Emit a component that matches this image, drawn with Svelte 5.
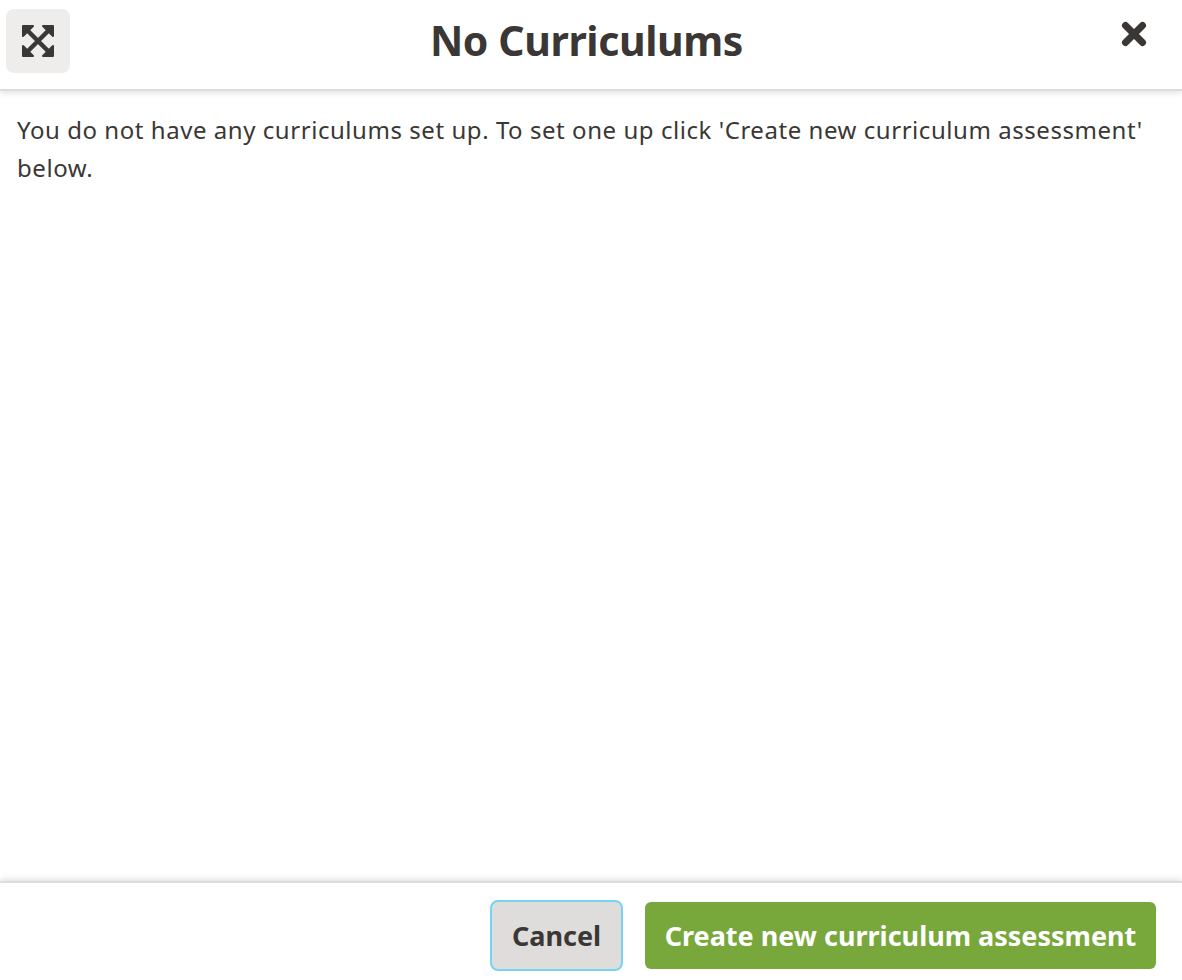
<script>
  const title = "No Curriculums";
  const message = "You do not have any curriculums set up. To set one up click 'Create new curriculum assessment' below.";
</script>

<div class="modal">
  <header class="head">
    <button class="expand" aria-label="Expand">
      <svg width="32" height="32" viewBox="0 0 32 32" fill="#3a3735" stroke="#3a3735">
        <path d="M4 4l24 24M28 4L4 28" stroke-width="4.5" fill="none"/>
        <path d="M1 1h10L1 11zM31 1v10L21 1zM31 31H21l10-10zM1 31V21l10 10z" stroke-width="2" stroke-linejoin="round"/>
      </svg>
    </button>
    <h1>{title}</h1>
    <button class="close" aria-label="Close">
      <svg width="26" height="26" viewBox="0 0 26 26" fill="none" stroke="#3a3735" stroke-width="7" stroke-linecap="round">
        <path d="M4.5 4.5l17 17M21.5 4.5l-17 17"/>
      </svg>
    </button>
  </header>

  <main class="body">
    <p>{message}</p>
  </main>

  <footer class="foot">
    <button class="btn cancel">Cancel</button>
    <button class="btn create">Create new curriculum assessment</button>
  </footer>
</div>

<style>
  :global(body) {
    background: #fff;
  }

  .modal {
    height: 980px;
    display: flex;
    flex-direction: column;
    font-family: "Noto Sans", "Open Sans", sans-serif;
    color: #3a3735;
    overflow: hidden;
  }

  .head {
    height: 91px;
    flex: none;
    display: flex;
    align-items: flex-start;
    justify-content: space-between;
    position: relative;
    box-sizing: border-box;
    padding: 9px 35px 0 6px;
    border-bottom: 2px solid #dedddb;
    box-shadow: 0 2px 6px rgba(0, 0, 0, 0.12);
  }

  .head h1 {
    position: absolute;
    left: 0;
    right: 9px;
    top: 12px;
    margin: 0;
    text-align: center;
    font-size: 41px;
    line-height: 56px;
    font-weight: 700;
    letter-spacing: -0.4px;
  }

  button {
    font-family: inherit;
    border: 0;
    padding: 0;
    cursor: pointer;
  }

  .expand {
    width: 64px;
    height: 64px;
    border-radius: 8px;
    background: #eeedeb;
    display: flex;
    align-items: center;
    justify-content: center;
  }

  .close {
    background: none;
    margin-top: 12px;
    width: 26px;
    height: 26px;
    position: relative;
    z-index: 1;
  }

  .close svg {
    display: block;
  }

  .body {
    flex: 1;
    padding: 20px 17px 0;
  }

  .body p {
    margin: 0;
    font-size: 24px;
    line-height: 38px;
    letter-spacing: 0.55px;
  }

  .foot {
    height: 99px;
    flex: none;
    box-sizing: border-box;
    display: flex;
    justify-content: flex-end;
    align-items: flex-start;
    gap: 22px;
    padding: 19px 26px 0 0;
    border-top: 2px solid #dedddb;
    box-shadow: 0 -2px 6px rgba(0, 0, 0, 0.12);
  }

  .btn {
    height: 67px;
    border-radius: 6px;
    font-size: 27px;
    font-weight: 700;
    white-space: nowrap;
  }

  .cancel {
    width: 133px;
    height: 71px;
    margin-top: -2px;
    background: #dedddb;
    color: #3a3735;
    border: 2px solid #76d3f2;
    border-radius: 8px;
  }

  .create {
    width: 511px;
    background: #78a73c;
    color: #fff;
  }
</style>
